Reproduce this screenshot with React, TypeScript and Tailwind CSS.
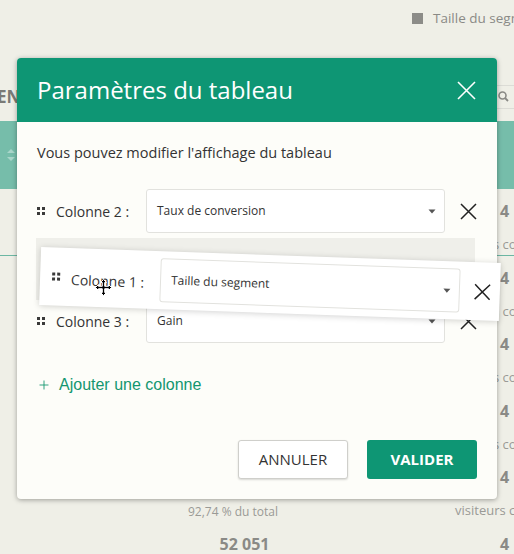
import { Plus } from "lucide-react";

const FONT = { fontFamily: '"Open Sans", "Liberation Sans", sans-serif' };

// right-hand column of the table behind the dialog
const ROWS = [
  { left: "", leftSub: "", sub: "s co" },
  { left: "", leftSub: "", sub: "s co" },
  { left: "", leftSub: "", sub: "s co" },
  { left: "", leftSub: "", sub: "s co" },
  { left: "", leftSub: "92,74 % du total", sub: "visiteurs co" },
  { left: "52 051", leftSub: "", sub: "" },
];

function Cross({ size, color, width = 1.8 }: { size: number; color: string; width?: number }) {
  return (
    <svg width={size} height={size} viewBox={`0 0 ${size} ${size}`} className="shrink-0">
      <path d={`M1 1 L${size - 1} ${size - 1} M${size - 1} 1 L1 ${size - 1}`} stroke={color} strokeWidth={width} />
    </svg>
  );
}

function Handle() {
  return (
    <div className="grid grid-cols-2 gap-[2px] w-[8px] shrink-0">
      {[0, 1, 2, 3].map((i) => (
        <span key={i} className="w-[3px] h-[3px] bg-[#3a3a3a]" />
      ))}
    </div>
  );
}

function Caret() {
  return (
    <svg width="8" height="5" viewBox="0 0 8 5" className="shrink-0">
      <path d="M0.5 0.5 L7.5 0.5 L4 4.5 Z" fill="#555" />
    </svg>
  );
}

function Select({ value, width }: { value: string; width: number }) {
  return (
    <div
      className="h-[44px] border border-[#e2e2de] rounded-[3px] bg-white flex items-center justify-between pl-[10px] pr-[8px] shrink-0"
      style={{ width }}
    >
      <span className="text-[12px] text-[#333]">{value}</span>
      <Caret />
    </div>
  );
}

function ColumnRow({ label, value }: { label: string; value: string }) {
  return (
    <div className="flex items-center h-[44px]">
      <Handle />
      <span className="ml-[11px] w-[90px] text-[14px] text-[#333]">{label}</span>
      <Select value={value} width={299} />
      <span className="ml-[15px]">
        <Cross size={17} color="#222" width={1.5} />
      </span>
    </div>
  );
}

function MoveCursor() {
  return (
    <svg width="17" height="17" viewBox="0 0 17 17">
      <path
        d="M8.5 0.5 L11.5 3.5 L9.7 3.5 L9.7 7.3 L13.5 7.3 L13.5 5.5 L16.5 8.5 L13.5 11.5 L13.5 9.7 L9.7 9.7 L9.7 13.5 L11.5 13.5 L8.5 16.5 L5.5 13.5 L7.3 13.5 L7.3 9.7 L3.5 9.7 L3.5 11.5 L0.5 8.5 L3.5 5.5 L3.5 7.3 L7.3 7.3 L7.3 3.5 L5.5 3.5 Z"
        fill="#000"
        stroke="#fff"
        strokeWidth="1"
      />
    </svg>
  );
}

export default function App() {
  return (
    <div className="relative w-[514px] h-[554px] overflow-hidden bg-[#efefe7]" style={FONT}>
      {/* page behind the overlay */}
      <div className="flex flex-col">
        <div className="h-[36px] flex items-center pl-[412px] gap-[10px] whitespace-nowrap">
          <span className="w-[11px] h-[11px] bg-[#8c8c88] shrink-0" />
          <span className="text-[13.5px] text-[#8a8a86]">Taille du segment</span>
        </div>
        <div className="h-[85px] flex items-center justify-between">
          <span className="text-[17px] font-bold text-[#7a7a76] -ml-[3px] mt-[36px]">EN</span>
          <div className="w-[17px] h-[24px] mt-[36px] border-y border-[#dcdcd6] flex items-center">
            <svg width="11" height="11" viewBox="0 0 11 11" className="ml-[1px]">
              <circle cx="4.5" cy="4.5" r="3.5" fill="none" stroke="#8a8a86" strokeWidth="1.6" />
              <path d="M7 7 L10 10" stroke="#8a8a86" strokeWidth="1.8" />
            </svg>
          </div>
        </div>
        <div className="h-[68px] bg-[#76bdaa] flex items-center pl-[6px]">
          <svg width="10" height="14" viewBox="0 0 10 14">
            <path d="M5 1 L9 5 L1 5 Z M5 13 L9 9 L1 9 Z" fill="#a9d6ca" />
          </svg>
        </div>
        {ROWS.map((r, i) => (
          <div
            key={i}
            className={`h-[66.5px] flex justify-between ${i === 0 ? "border-b border-[#6cb7a3]" : ""}`}
          >
            <div className="w-[490px] flex flex-col items-center pt-[10px]">
              <span className="h-[22px] text-[16px] font-bold text-[#8a8a86] ml-[-1px]">{r.left}</span>
              <span className="mt-[16px] text-[12px] text-[#9a9a96] -ml-[24px]">{r.leftSub}</span>
            </div>
            <div className="w-[17px] flex flex-col whitespace-nowrap pt-[10px]">
              <span className="h-[22px] pl-[3px] text-[16px] font-bold text-[#8a8a86]">4</span>
              <span className={`mt-[14px] text-[13px] text-[#9a9a96] ${r.sub.length > 5 ? "-ml-[42px]" : "-ml-[4px]"}`}>
                {r.sub}
              </span>
            </div>
          </div>
        ))}
      </div>

      {/* dialog */}
      <div className="absolute left-[17px] top-[58px] w-[480px] rounded-[4px] bg-[#fdfdf9] shadow-[0_1px_5px_rgba(0,0,0,0.35)] overflow-hidden">
        <div className="h-[64px] bg-[#0e9674] flex items-center justify-between pl-[20px] pr-[21px]">
          <h1 className="text-[24px] text-white leading-none">Paramètres du tableau</h1>
          <Cross size={19} color="#fff" width={1.6} />
        </div>
        <div className="px-[20px] pt-[19px] pb-[20px]">
          <p className="text-[14.5px] leading-[24px] text-[#333]">Vous pouvez modifier l'affichage du tableau</p>

          <div className="mt-[24px] flex flex-col">
            <ColumnRow label="Colonne 2 :" value="Taux de conversion" />
            <div className="mt-[5px] h-[62px] -ml-[1px] w-[439px] bg-[#efefea]" />
            <div className="mt-[-1px]">
              <ColumnRow label="Colonne 3 :" value="Gain" />
            </div>
          </div>

          <button className="mt-[30px] flex items-center gap-[8px] text-[#13966f] text-[16px] leading-[24px]" style={{ fontFamily: '"Liberation Sans", Arial, sans-serif' }}>
            <Plus size={14} strokeWidth={1.5} />
            Ajouter une colonne
          </button>

          <div className="mt-[43px] flex justify-end gap-[19px]">
            <button className="w-[110px] h-[39px] rounded-[3px] border border-[#cfcfcb] bg-white text-[15px] text-[#333] shadow-[0_1px_2px_rgba(0,0,0,0.15)]">
              ANNULER
            </button>
            <button className="w-[110px] h-[39px] rounded-[3px] bg-[#0e9674] text-[15px] font-bold text-white">
              VALIDER
            </button>
          </div>
        </div>
      </div>

      {/* row being dragged */}
      <div className="absolute left-[40px] top-[255px] w-[460px] h-[58px] rotate-[2deg] bg-white shadow-[0_1px_6px_rgba(0,0,0,0.18)] flex items-center pl-[12px]">
        <Handle />
        <span className="ml-[11px] w-[89px] text-[14px] text-[#333] mt-[4px]">Colonne 1 :</span>
        <Select value="Taille du segment" width={300} />
        <span className="ml-[14px]">
          <Cross size={17} color="#222" width={1.5} />
        </span>
      </div>

      {/* drag cursor */}
      <div className="absolute left-[95px] top-[279px]">
        <MoveCursor />
      </div>
    </div>
  );
}
